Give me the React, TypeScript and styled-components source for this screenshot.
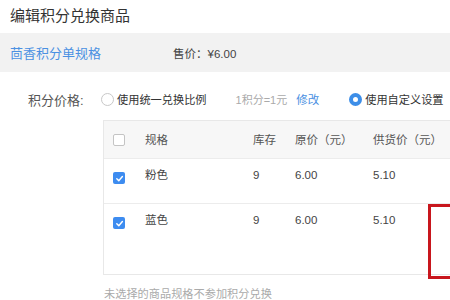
import styled, { createGlobalStyle } from 'styled-components';

const GlobalStyle = createGlobalStyle`
  html, body {
    margin: 0;
    padding: 0;
    background: #fff;
    overflow: hidden;
  }
  body {
    font-family: "Liberation Sans", "Noto Sans CJK SC", sans-serif;
    color: #333;
  }
`;

const Page = styled.div`
  position: relative;
  width: 450px;
  height: 300px;
  overflow: hidden;
`;

const Title = styled.h1`
  margin: 0;
  padding-left: 10px;
  height: 33px;
  line-height: 32px;
  font-size: 15px;
  font-weight: normal;
  color: #333;
`;

const InfoBar = styled.div`
  display: flex;
  align-items: center;
  height: 39px;
  padding-left: 10px;
  background: #f2f2f2;
`;

const ProductName = styled.span`
  font-size: 13px;
  color: #4a90e2;
  width: 163px;
`;

const Price = styled.span`
  font-size: 11.5px;
  color: #444;
`;

const PriceRow = styled.div`
  display: flex;
  align-items: center;
  height: 22px;
  margin-top: 16px;
  padding-left: 28px;
`;

const Label = styled.span`
  width: 73px;
  font-size: 13px;
  color: #555;
`;

const Option = styled.label<{ gap?: number }>`
  display: flex;
  align-items: center;
  gap: 3px;
  font-size: 11.2px;
  color: #333;
  margin-right: ${(p) => p.gap ?? 0}px;
`;

const Radio = styled.span<{ checked?: boolean }>`
  box-sizing: border-box;
  width: 13px;
  height: 13px;
  border-radius: 50%;
  border: ${(p) => (p.checked ? '4px solid #3d8ee8' : '1px solid #c8c8c8')};
  background: #fff;
`;

const Ratio = styled.span`
  font-size: 11px;
  color: #aaa;
  margin-right: 9px;
`;

const Link = styled.span`
  font-size: 11.5px;
  color: #4a90e2;
  margin-right: 30px;
`;

const Table = styled.div`
  margin-top: 10px;
  margin-left: 103px;
  width: 380px;
  border: 1px solid #e8e8e8;
  font-size: 11.5px;
`;

const Row = styled.div<{ head?: boolean; h: number }>`
  display: grid;
  grid-template-columns: 41px 108px 42px 78px 1fr;
  align-items: ${(p) => (p.head ? 'center' : 'start')};
  box-sizing: border-box;
  height: ${(p) => p.h}px;
  padding-top: ${(p) => (p.head ? 0 : 6)}px;
  background: ${(p) => (p.head ? '#f7f7f7' : '#fff')};
  color: ${(p) => (p.head ? '#555' : '#444')};
  border-bottom: 1px solid #ececec;
  &:last-child {
    border-bottom: none;
  }
`;

const Cell = styled.div`
  line-height: 20px;
`;

const Check = styled.span<{ checked?: boolean }>`
  box-sizing: border-box;
  display: flex;
  align-items: center;
  justify-content: center;
  width: 12px;
  height: 12px;
  margin-left: 9px;
  margin-top: ${(p) => (p.checked ? 7 : 0)}px;
  border-radius: 2px;
  border: ${(p) => (p.checked ? 'none' : '1px solid #c4c4c4')};
  background: ${(p) => (p.checked ? '#3d8cf0' : '#fff')};
`;

const Footer = styled.div`
  margin-top: 10px;
  margin-left: 104px;
  font-size: 11.2px;
  color: #aaa;
`;

const Annotation = styled.div`
  position: absolute;
  left: 428px;
  top: 204px;
  width: 40px;
  height: 75px;
  box-sizing: border-box;
  border: 3px solid #c8161d;
`;

function Tick() {
  return (
    <svg width="9" height="9" viewBox="0 0 10 10">
      <path d="M2 5.2 L4.2 7.4 L8.2 2.8" fill="none" stroke="#fff" strokeWidth="1.6" strokeLinecap="round" strokeLinejoin="round" />
    </svg>
  );
}

const rows = [
  { name: '粉色', h: 45 },
  { name: '蓝色', h: 70 },
];

export default function App() {
  return (
    <Page>
      <GlobalStyle />
      <Title>编辑积分兑换商品</Title>
      <InfoBar>
        <ProductName>茴香积分单规格</ProductName>
        <Price>售价：¥6.00</Price>
      </InfoBar>
      <PriceRow>
        <Label>积分价格:</Label>
        <Option gap={29}>
          <Radio />
          使用统一兑换比例
        </Option>
        <Ratio>1积分=1元</Ratio>
        <Link>修改</Link>
        <Option>
          <Radio checked />
          使用自定义设置
        </Option>
      </PriceRow>
      <Table>
        <Row head h={38}>
          <Cell>
            <Check />
          </Cell>
          <Cell>规格</Cell>
          <Cell>库存</Cell>
          <Cell>原价（元）</Cell>
          <Cell>供货价（元）</Cell>
        </Row>
        {rows.map((r) => (
          <Row key={r.name} h={r.h}>
            <Cell>
              <Check checked>
                <Tick />
              </Check>
            </Cell>
            <Cell>{r.name}</Cell>
            <Cell>9</Cell>
            <Cell>6.00</Cell>
            <Cell>5.10</Cell>
          </Row>
        ))}
      </Table>
      <Footer>未选择的商品规格不参加积分兑换</Footer>
      <Annotation />
    </Page>
  );
}
